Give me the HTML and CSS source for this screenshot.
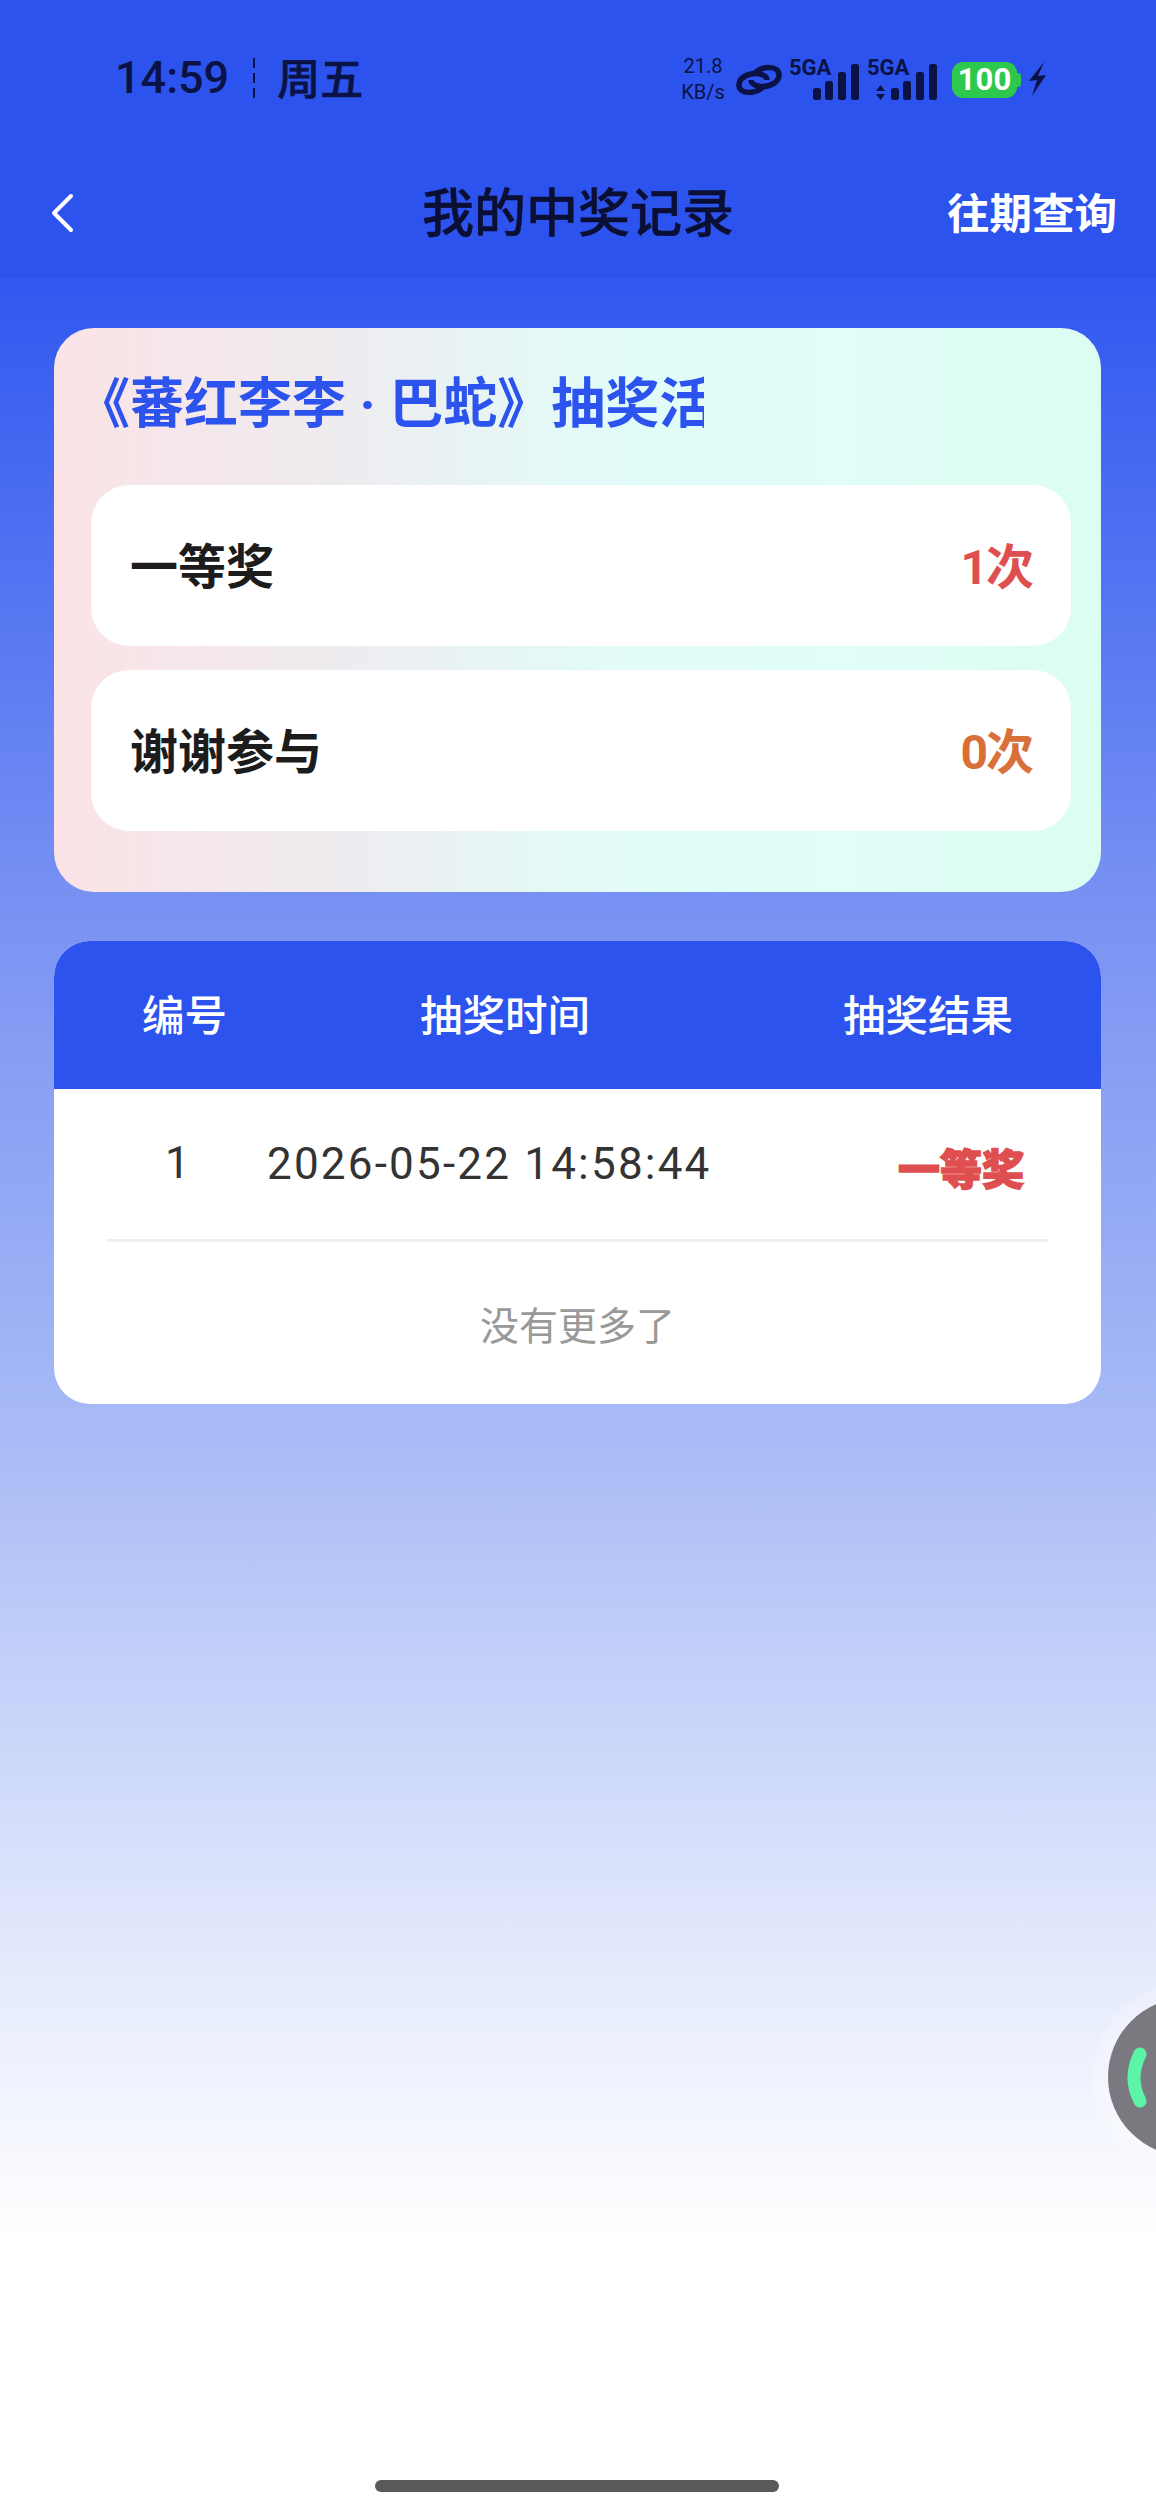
FILE: index.html
```html
<!DOCTYPE html>
<html lang="zh-CN">
<head>
  <meta charset="UTF-8">
  <meta name="viewport" content="width=device-width, initial-scale=1.0">
  <title>我的中奖记录</title>
  <link rel="stylesheet" href="styles.css">
</head>
<body>
  <div class="page">
    <div class="top">
      <div class="status-bar">
        <div class="clock">
          <span class="time">14:59</span>
          <span class="sep"></span>
          <span class="day">周五</span>
        </div>
        <div class="indicators">
          <div class="speed"><span>21.8</span><span>KB/s</span></div>
          <svg class="link" width="46" height="34" viewBox="0 0 46 34" fill="none" stroke="#0b1245" stroke-width="5.5">
            <path d="M27 24 C20 31 3 32 3 22 C3 13 16 9 24 11 C28 12 31 14 31 17"/>
            <path d="M19 10 C26 3 43 2 43 12 C43 21 30 25 22 23 C18 22 15 20 15 17"/>
          </svg>
          <div class="signal">
            <span class="net">5GA</span>
            <svg width="70" height="36" viewBox="0 0 70 36" fill="#0b1245">
              <rect x="24" y="24" width="8" height="12" rx="2.5"/>
              <rect x="36" y="17" width="8" height="19" rx="2.5"/>
              <rect x="49" y="8" width="8" height="28" rx="2.5"/>
              <rect x="62" y="0" width="8" height="36" rx="2.5"/>
            </svg>
          </div>
          <div class="signal">
            <span class="net">5GA</span>
            <svg width="70" height="36" viewBox="0 0 70 36" fill="#0b1245">
              <path d="M9 27 L13.5 21 L18 27 Z M9 30 L18 30 L13.5 36 Z"/>
              <rect x="24" y="24" width="8" height="12" rx="2.5"/>
              <rect x="36" y="17" width="8" height="19" rx="2.5"/>
              <rect x="49" y="8" width="8" height="28" rx="2.5"/>
              <rect x="62" y="0" width="8" height="36" rx="2.5"/>
            </svg>
          </div>
          <div class="battery">100</div>
          <svg class="bolt" width="17" height="34" viewBox="0 0 17 34" fill="#0b1245">
            <path d="M15 0 L0 19 L8 18 L3 34 L17 13 L9 14 Z"/>
          </svg>
        </div>
      </div>
      <div class="nav">
        <svg class="back" width="24" height="40" viewBox="0 0 24 40" fill="none" stroke="#fff" stroke-width="4" stroke-linecap="round" stroke-linejoin="round">
          <path d="M20 3 L3 20 L20 37"/>
        </svg>
        <div class="nav-title">我的中奖记录</div>
        <div class="nav-link">往期查询</div>
      </div>
    </div>

    <div class="content">
      <div class="summary">
        <div class="summary-title">《蕃红李李 · 巴蛇》抽奖活动中奖统计</div>
        <div class="prize-row">
          <span class="prize-name">一等奖</span>
          <span class="prize-count red">1次</span>
        </div>
        <div class="prize-row">
          <span class="prize-name">谢谢参与</span>
          <span class="prize-count orange">0次</span>
        </div>
      </div>

      <div class="records">
        <div class="records-head">
          <span>编号</span>
          <span class="head-time">抽奖时间</span>
          <span class="head-result">抽奖结果</span>
        </div>
        <div class="record-row">
          <span class="rec-no">1</span>
          <span class="rec-time">2026-05-22 14:58:44</span>
          <span class="rec-result">一等奖</span>
        </div>
        <div class="no-more">没有更多了</div>
      </div>
    </div>

    <div class="float-btn">
      <svg width="158" height="158" viewBox="0 0 158 158" fill="none">
        <path d="M32 56 Q20 80 32 103" stroke="#5cf5a8" stroke-width="13" stroke-linecap="round"/>
      </svg>
    </div>
    <div class="home-bar"></div>
  </div>
</body>
</html>
```

FILE: styles.css
```css
* {
  box-sizing: border-box;
}
body {
  margin: 0;
  font-family: "Noto Sans CJK SC", "Noto Sans", sans-serif;
  background: #fff;
}
.page {
  position: relative;
  width: 1156px;
  height: 2510px;
  overflow: hidden;
  background: linear-gradient(180deg, #3058f0 278px, #7a93f3 920px, #a9bbf6 1440px, #e3e9fc 1950px, #ffffff 2240px);
}
.top {
  background: #2c53ee;
  height: 278px;
}
.status-bar {
  height: 156px;
  display: flex;
  align-items: center;
  justify-content: space-between;
  padding: 0 110px 0 115px;
  color: #0b1245;
}
.clock {
  display: flex;
  align-items: center;
}
.time {
  font-family: Roboto, sans-serif;
  font-weight: 500;
  font-size: 45px;
  line-height: 50px;
}
.sep {
  width: 2px;
  height: 40px;
  margin: 0 22px 0 24px;
  background: repeating-linear-gradient(180deg, #0b1245 0 10px, transparent 10px 15px);
}
.day {
  font-size: 43px;
  font-weight: 500;
  line-height: 50px;
  margin-top: -4px;
  -webkit-text-stroke: 0.6px #0b1245;
}
.indicators {
  display: flex;
  align-items: center;
}
.speed {
  display: flex;
  flex-direction: column;
  align-items: center;
  width: 42px;
  font-family: Roboto, sans-serif;
  font-size: 20px;
  line-height: 26px;
  white-space: nowrap;
  margin-top: 2px;
  margin-right: 12px;
}
.link {
  margin-right: 7px;
  margin-top: 3px;
}
.signal {
  position: relative;
  width: 70px;
  height: 40px;
  margin-top: 4px;
  margin-right: 8px;
  display: flex;
  align-items: flex-end;
}
.net {
  position: absolute;
  top: -1px;
  left: 0;
  font-family: Roboto, sans-serif;
  font-weight: 700;
  font-size: 22px;
  line-height: 18px;
}
.battery {
  position: relative;
  width: 65px;
  height: 36px;
  margin-left: 7px;
  margin-right: 12px;
  margin-top: 4px;
  border-radius: 11px;
  background: #2dc84d;
  color: #fff;
  font-family: Roboto, sans-serif;
  font-weight: 700;
  font-size: 31px;
  line-height: 36px;
  text-align: center;
}
.battery::after {
  content: "";
  position: absolute;
  right: -4px;
  top: 11px;
  width: 4px;
  height: 14px;
  border-radius: 0 3px 3px 0;
  background: #2dc84d;
}
.bolt {
  margin-top: 2px;
}
.nav {
  height: 122px;
  padding: 0 39px 8px 51px;
  display: flex;
  align-items: center;
  justify-content: space-between;
  position: relative;
}
.nav-title {
  position: absolute;
  left: 0;
  right: 0;
  top: 23px;
  text-align: center;
  font-size: 52px;
  line-height: 62px;
  font-weight: 500;
  color: #0b0f33;
  -webkit-text-stroke: 0.5px #0b0f33;
}
.nav-link {
  font-size: 42.5px;
  font-weight: 700;
  color: #fff;
  margin-top: -6px;
}
.content {
  padding: 50px 55px 0 54px;
}
.summary {
  height: 564px;
  padding: 0 30px 0 37px;
  border-radius: 40px;
  background: linear-gradient(90deg, #fbe3e6 0%, #eeecf0 28%, #e2fbf8 52%, #e0fdf8 75%, #dcfdf1 100%);
}
.summary-title {
  width: 613px;
  height: 157px;
  padding-top: 47px;
  text-indent: -15px;
  font-family: Roboto, "Noto Sans CJK SC", sans-serif;
  font-size: 54px;
  line-height: 60px;
  font-weight: 700;
  color: #2c53ee;
  white-space: nowrap;
  overflow: hidden;
}
.prize-row {
  height: 161px;
  margin-bottom: 24px;
  padding: 0 39px 5px 39px;
  display: flex;
  align-items: center;
  justify-content: space-between;
  border-radius: 38px;
  background: #fff;
}
.prize-name {
  font-size: 48px;
  font-weight: 700;
  color: #1c1c1c;
}
.prize-count {
  font-family: Roboto, "Noto Sans CJK SC", sans-serif;
  font-size: 48px;
  font-weight: 700;
  letter-spacing: -2px;
}
.red {
  color: #e04f4f;
}
.orange {
  color: #d9703a;
}
.records {
  margin-top: 49px;
  border-radius: 36px;
  overflow: hidden;
  background: #fff;
}
.records-head {
  height: 148px;
  padding: 0 88px 5px;
  display: flex;
  align-items: center;
  background: #2c53ee;
  color: #fff;
  font-size: 42.5px;
  font-weight: 500;
}
.head-time {
  margin-left: 193px;
}
.head-result {
  margin-left: auto;
}
.record-row {
  height: 153px;
  margin: 0 53px;
  display: flex;
  align-items: center;
  border-bottom: 3px solid #eeeeee;
  color: #333;
  font-family: Roboto, sans-serif;
  font-size: 44px;
}
.rec-no {
  width: 160px;
  padding-left: 58px;
  margin-top: -2px;
}
.rec-time {
  margin-top: -1px;
  letter-spacing: 2.2px;
}
.rec-result {
  margin-left: auto;
  margin-right: 24px;
  margin-top: 4px;
  font-family: "Noto Sans CJK SC", sans-serif;
  font-size: 42px;
  font-weight: 900;
  color: #e04f4f;
  -webkit-text-stroke: 1.5px #e04f4f;
}
.no-more {
  height: 162px;
  display: flex;
  align-items: center;
  justify-content: center;
  font-size: 39px;
  color: #999;
}
.float-btn {
  position: absolute;
  left: 1108px;
  top: 1998px;
  width: 158px;
  height: 158px;
  border-radius: 50%;
  background: #79797f;
  box-shadow: 0 0 0 15px rgba(255, 255, 255, 0.25);
}
.home-bar {
  position: absolute;
  left: 375px;
  top: 2480px;
  width: 404px;
  height: 12px;
  border-radius: 6px;
  background: #5a5a5a;
}
```
